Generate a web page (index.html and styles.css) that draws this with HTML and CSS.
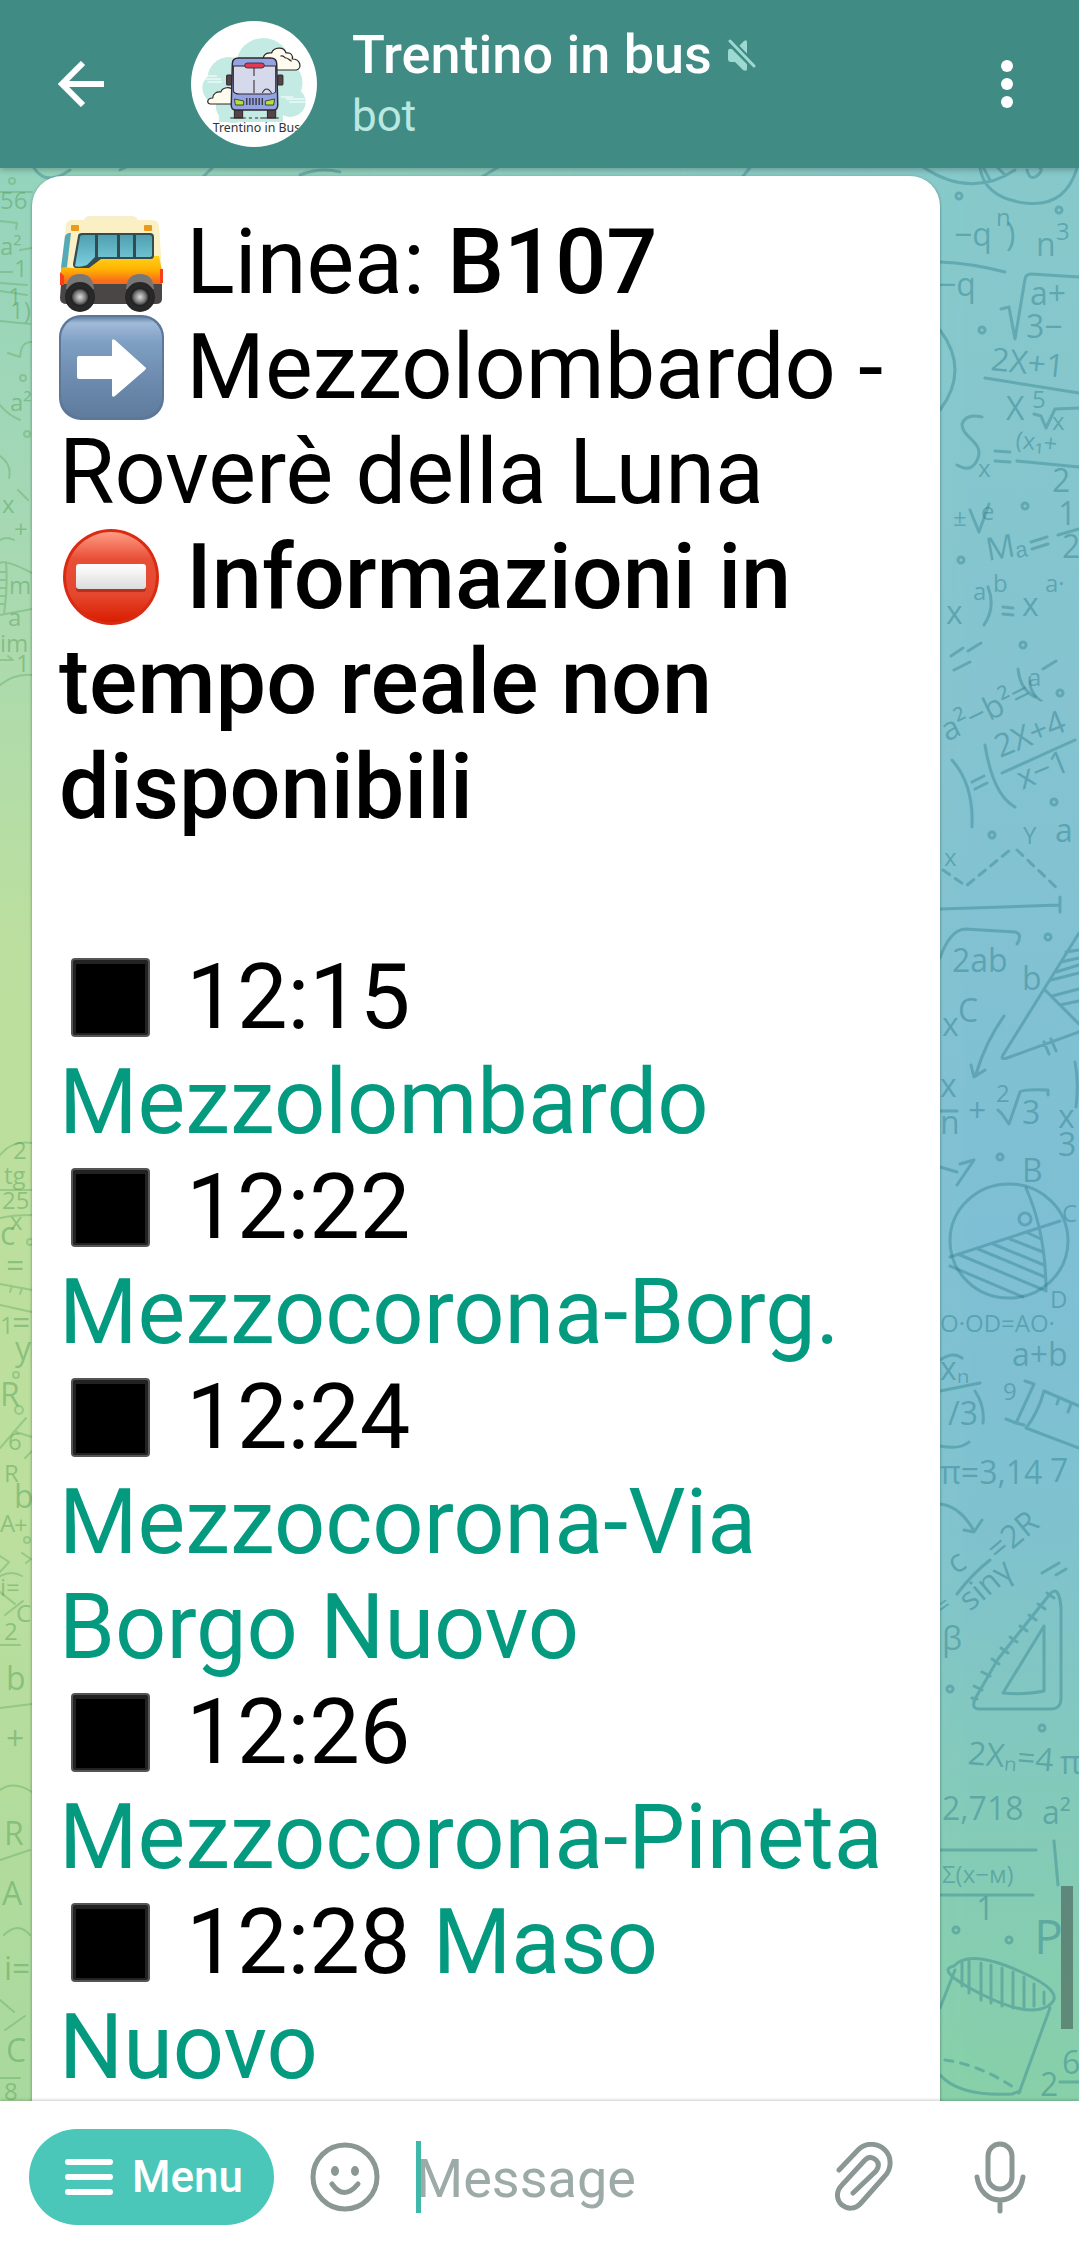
FILE: index.html
```html
<!DOCTYPE html>
<html lang="it">
<head>
<meta charset="utf-8">
<meta name="viewport" content="width=device-width, initial-scale=1">
<title>Trentino in bus</title>
<link rel="stylesheet" href="styles.css">
</head>
<body>
<svg class="defs" width="0" height="0" aria-hidden="true">
  <defs>
    <symbol id="stop" viewBox="0 0 105 105">
      <rect x="12" y="13" width="79" height="79" rx="4" fill="#555"/>
      <rect x="14" y="15" width="75" height="75" rx="2" fill="#222"/>
      <rect x="17" y="19" width="69" height="69" fill="#000"/>
    </symbol>
  </defs>
</svg>

<header class="topbar">
  <button class="icon-button back" aria-label="Indietro">
    <svg width="46" height="46" viewBox="0 0 46 46" fill="none" stroke="#fff" stroke-width="6"><path d="M25 2 4 23l21 21M4 23h42"/></svg>
  </button>
  <svg class="avatar" viewBox="185 21 122 126" preserveAspectRatio="none" role="img" aria-label="Trentino in Bus">
    <rect x="185" y="21" width="122" height="126" fill="#fff"/>
    <g fill="#c3ebe4"><circle cx="255" cy="64" r="26"/><circle cx="222" cy="78" r="21"/><circle cx="268" cy="83" r="25"/><circle cx="212" cy="88" r="16"/><circle cx="226" cy="106" r="17"/><circle cx="281" cy="102" r="15"/><rect x="212" y="60" width="62" height="62"/></g>
    <g stroke="#fff" stroke-width="1"><path d="M193 79h21M198 76h12M201 82h14M277 99h18M272 97h12M280 102h16"/></g>
    <g fill="#fffbee" stroke="#30272b" stroke-width="1.2" stroke-linejoin="round" stroke-linecap="round">
      <path d="M255 62c-1-6 2-10 8-9 2-6 12-7 14 0 5-1 7 3 6 6 8 0 10 9 4 11h-19"/>
      <path d="M272 56c3-1 3 2 5 2s3 2 5 3" fill="none"/>
      <path d="M226 91c-2-5-11-4-12 1-4-1-8 2-8 6-6 0-6 6-2 6h22"/>
    </g>
    <rect x="227" y="109" width="8" height="9" fill="#544349" stroke="#30272b"/><rect x="259" y="109" width="8" height="9" fill="#544349" stroke="#30272b"/>
    <rect x="219.500" y="75" width="5" height="10" rx="1" fill="#544349" stroke="#30272b"/><rect x="269" y="75" width="5" height="10" rx="1" fill="#544349" stroke="#30272b"/>
    <path d="M225 64q0-6 6-6h31q6 0 6 6l1 41q0 5-4 5h-37q-4 0-4-5z" fill="#93a3e3" stroke="#30272b" stroke-width="1.400"/>
    <path d="M226 66h41v26q-2 2-6 2h-29q-5 0-6-3z" fill="#d6d9eb" stroke="#30272b" stroke-width="1"/>
    <path d="M246 67v9m0 4v13M254 93q4-8 9 0" fill="none" stroke="#30272b"/>
    <rect x="237" y="63" width="19" height="5" rx="2.500" fill="#e23a55" stroke="#30272b" stroke-width=".8"/>
    <path d="M239 98v7m3-7v7m3-7v7m3-7v7m3-7v7m3-7v7" stroke="#30272b" stroke-width="1.200"/>
    <path d="M227 99l9 2v4h-8zM266 99l-9 2v4h8z" fill="#b4e332" stroke="#30272b" stroke-width=".8"/>
    <path d="M223 118h15m3 0h3m3 0h3m2 0h18" stroke="#30272b" stroke-width="1.200"/>
    <text x="206" y="132" font-size="12" fill="#333" class="avatar-text">Trentino in Bus</text>
  </svg>
  <div class="who">
    <h1 class="title">Trentino in bus
      <svg class="mute" width="28" height="32" viewBox="0 0 28 32"><path d="M0 12q0-3 4-2l15 15v5q0 3-4 1l-8-8H3q-3 0-3-3zM11 7l5-5q3-2 3 1v13z" fill="#9bd9d1"/><path d="M2 2l24 25" stroke="#408b84" stroke-width="7"/><path d="M2 2l24 25" stroke="#9bd9d1" stroke-width="3" stroke-linecap="round"/></svg>
    </h1>
    <p class="subtitle">bot</p>
  </div>
  <button class="icon-button more" aria-label="Altre opzioni">
    <svg width="12" height="48" viewBox="0 0 12 48" fill="#fff"><circle cx="6" cy="6" r="6"/><circle cx="6" cy="24" r="6"/><circle cx="6" cy="42" r="6"/></svg>
  </button>
</header>

<main class="chat">
  <svg class="wallpaper" viewBox="0 168 1079 1933" preserveAspectRatio="none" aria-hidden="true">
    <defs>
      <linearGradient id="left" x1="0" y1="0" x2="0" y2="1"><stop offset="0" stop-color="#94d4bd"/><stop offset=".18" stop-color="#a5d8b4"/><stop offset=".4" stop-color="#bcdf9f"/><stop offset=".7" stop-color="#bcdf9d"/><stop offset="1" stop-color="#a9d99e"/></linearGradient>
      <linearGradient id="right" x1="0" y1="0" x2="0" y2="1"><stop offset="0" stop-color="#87c9ca"/><stop offset=".3" stop-color="#84c3d0"/><stop offset=".55" stop-color="#7ebfd5"/><stop offset=".7" stop-color="#7fc2cf"/><stop offset=".85" stop-color="#84cab9"/><stop offset="1" stop-color="#87d0a8"/></linearGradient>
      <linearGradient id="fade"><stop offset=".2" stop-color="#000"/><stop offset=".9" stop-color="#fff"/></linearGradient>
      <mask id="m"><rect y="168" width="1079" height="1933" fill="url(#fade)"/></mask>
    </defs>
    <rect y="168" width="1079" height="1933" fill="url(#left)"/>
    <rect y="168" width="1079" height="1933" fill="url(#right)" mask="url(#m)"/>
    <g class="doodle-lines">
      <path d="M920 165q50 35 95 5M980 168q5 30 45 35t52-35M990 180l-8-15M1005 175l-10-10M1027 170q3 12 11 5t-4-10M30 160q12 30 40 10M120 170l20-10M200 180l20-20M300 175q20-8 40-3M480 178l20-12M740 180l12-15"/>
      <circle cx="959" cy="196" r="3"/><circle cx="1059" cy="210" r="3"/><circle cx="982" cy="330" r="3"/><circle cx="1025" cy="506" r="3"/><circle cx="961" cy="560" r="3"/><circle cx="1023" cy="645" r="3"/><circle cx="1060" cy="693" r="3"/><circle cx="1054" cy="802" r="3"/><circle cx="992" cy="835" r="3"/><circle cx="1048" cy="937" r="3"/><circle cx="1000" cy="1157" r="3"/><circle cx="950" cy="1689" r="3"/><circle cx="1042" cy="1728" r="3"/><circle cx="956" cy="1930" r="3"/><circle cx="1009" cy="1940" r="3"/>
      <path d="M940 262q30 1 65 10M1001 309l8-2 6 32 10-60q1-5 6-5l48 3M940 330q30 40 0 80M985 378l94 15M1034 414l7 2 5 12 9-19 24-1M982 417q-16-4-20 7c0 14 22 18 16 34q-6 16-21 7M995 451l15 1M995 461l15 1M1017 461l62 6M1058 535l21-6M1031 542l16-5M1032 549l16-5M988 587q8 20-4 38M1003 607l10 1M1003 614l10 1M970 510l9 22 10-28"/>
      <path d="M954 670l16-8M951 656l12-8m5 3l13-8M1018 669q2 20 17 28M1043 669l13-8M952 760q22 25 20 67M972 782l12-6M975 789l12-6M985 745q8 50 30 62M1002 773l73-33"/>
      <path stroke-dasharray="8 7" d="M943 870l23 16 44-36M1017 850l42 40"/>
      <path d="M940 909l120-4m0-8v15M940 958q10-28 25-29l50 3q8 2 2 12M1004 1016q-18 25-28 58m-5-9l3 12 11-7M1079 933l-76 122q-3 5 4 3l72-26M1045 990l34 34M1051 980l28-7M1056 972l23-7M1061 962l18-4M1066 952l13-2M1052 996l27-7M1060 1005l19-4M1044 1042l5 12m2-15l5 12"/>
      <path d="M940 1111h17M998 1110l4 4 7 10 11-32q2-3 28-2v5M940 1167l17 5M960 1164l14-4-17 25M1075 1062q4 20 1 45"/>
      <ellipse cx="1009" cy="1241" rx="59" ry="57"/><circle cx="1025" cy="1219" r="6"/>
      <path d="M950 1257l110-36M1026 1188q20 45 20 103M960 1255l84 35M978 1249l67 28M993 1244l51 21M1010 1239l33 13M1026 1232l15 7M950 1266l73 31M940 1360q13-9 22-2M940 1391l40-8M1025 1381l9 3-18 39-10-4m10 4l8 2M1079 1406l-35-15q-6 22-18 37l53 20M1059 1398l-2 6M1071 1404l-3 8M975 1391q10 15 8 32M940 1446q20 4 29-4"/>
      <path d="M940 1504q20 2 34 27m-10-1l10 2 8-12M957 1594q15-20 33-34M1042 1573l17-10m-3 12l10-6M998 1659l52-65q9-10 11 14v90q0 12-12 11h-70q-8 0-4-10zM1044 1626v65q-18 4-41 2zM1054 1598l-7-5M1045 1609l-7-5M1036 1620l-7-5M1027 1631l-7-5M1017 1642l-7-5M1008 1653l-7-5M999 1664l-7-5M990 1676l-8-4M982 1690l-8-4M977 1699l-5-1"/>
      <path d="M940 1850h96M940 1895h93M1054 1841l4 44M954 1966q15-17 65 5t29 35q-20 12-67-12t-27-28M955 1970l-15 38M1050 2008l-31 85M940 2075q20 22 72 19l8-3M962 1961v25M969 1961v32M981 1963v37M991 1965v38M1002 1968v38M1013 1972v36M1024 1977v30M1034 1984v22M1044 1992v12M1060 2082h19"/>
      <path stroke-dasharray="8 8" d="M945 2060q35 5 68 27"/>
    </g>
    <g class="doodle-text">
      <text x="954" y="246">−q</text><text x="996" y="226" class="small">n</text><text x="1006" y="246">)</text><text x="1036" y="256">n</text><text x="1056" y="240" class="small">3</text><text x="938" y="296">−q</text><text x="1030" y="305">a+</text><text x="1026" y="338">3−</text><text x="990" y="370" transform="rotate(6 990 370)">2X+1</text><text x="1006" y="420">X</text><text x="1032" y="408" class="small">5</text><text x="1052" y="430" class="small">x</text><text x="978" y="477" class="small">x</text><text x="1015" y="448" class="small" transform="rotate(6 1015 448)">(x₁+</text><text x="1052" y="492">2</text><text x="953" y="526" class="small">±</text><text x="981" y="520" class="small">e</text><text x="988" y="561" transform="rotate(-10 988 561)">Mₐ</text><text x="1058" y="525">1</text><text x="1062" y="558">2</text><text x="946" y="624">x</text><text x="973" y="600" class="small">a</text><text x="993" y="592" class="small">b</text><text x="1022" y="616">x</text><text x="1045" y="592" class="small">a·</text>
      <text x="947" y="742" transform="rotate(-26 947 742)">a²−b²=(</text><text x="1028" y="686" class="small">a</text><text x="1000" y="758" transform="rotate(-22 1000 758)">2X+4</text><text x="1022" y="790" transform="rotate(-22 1022 790)">x−1</text><text x="1023" y="844" class="small">Y</text><text x="944" y="866" class="small">x</text><text x="1055" y="842">a</text>
      <text x="952" y="972">2ab</text><text x="1022" y="990">b</text><text x="958" y="1022">C</text><text x="942" y="1036">x</text><text x="940" y="1097">x</text><text x="940" y="1134">n</text><text x="968" y="1122">+</text><text x="996" y="1102" class="small">2</text><text x="1022" y="1124">3</text><text x="1058" y="1128">x</text><text x="1058" y="1156">3</text>
      <text x="1022" y="1182">B</text><text x="1062" y="1222" class="small">C</text><text x="1050" y="1308" class="small">D</text><text x="940" y="1332" class="small">O·OD=AO·</text><text x="1012" y="1366">a+b</text><text x="940" y="1380">xₙ</text><text x="948" y="1425">/3</text><text x="1003" y="1400" class="small">9</text><text x="940" y="1484">π=3,14</text><text x="1050" y="1482">7</text><text x="998" y="1562" transform="rotate(-40 998 1562)">=2R</text><text x="955" y="1575" transform="rotate(-30 955 1575)">c</text><text x="970" y="1612" transform="rotate(-40 970 1612)">sinγ</text><text x="942" y="1616" class="small" transform="rotate(-35 942 1616)">=</text><text x="942" y="1650">β</text>
      <text x="967" y="1764" transform="rotate(5 967 1764)">2Xₙ=4</text><text x="1060" y="1774">π</text><text x="942" y="1820">2,718</text><text x="1042" y="1824">a²</text><text x="942" y="1883" class="small">Σ(x−м)</text><text x="976" y="1920">1</text><text x="1034" y="1954" class="big">P</text><text x="1040" y="2096">2</text><text x="1062" y="2074">6</text>
    </g>
    <g class="doodle-lines green"><path d="M0 192h32M0 221l17 2-1 6M20 250l12-2M0 272h12M0 283l27 2M0 291l27 4M0 321l30 3M8 353l12 4q1-16 12-15M0 405q8 10 20 15M0 456q12 8 9 22M18 490l10 10M0 540q7-4 14 0M0 563q5-4 32 10M0 615l32-6M6 562q2 25-2 52M0 572h5M0 580h5M0 588h5M0 596h5M0 604h5M0 660h13l-5-4M0 685q15-12 32-10M0 1155q12-15 32-12M0 1190h32M0 1218q12-3 32-3M0 1284l32 6M12 1286l-2 6M22 1288l-2 6M0 1305l32 7M0 1448l26-30M16 1432l16 5M25 1458l7-7M22 1553l9 6-5 4M0 1556l9 6-9 10M0 1576q12-6 22 0M0 1592l15 12M5 1615l18-14M0 1645h20M0 1708l32-4M0 1790q14-10 32 2M0 1860l30-10M4 1935q14-14 26 0M0 2000l14 12M5 2030l20-14M0 2078h20"/><circle cx="12" cy="181" r="3"/><circle cx="23" cy="378" r="3"/><circle cx="27" cy="434" r="3"/><circle cx="16" cy="1375" r="3"/><circle cx="19" cy="1410" r="4"/><circle cx="30" cy="1242" r="3"/><circle cx="27" cy="1540" r="3"/></g>
    <g class="doodle-text green"><text x="0" y="209" class="small">56</text><text x="0" y="255" class="small">a²</text><text x="14" y="277" class="small">1</text><text x="8" y="305" class="small">1</text><text x="10" y="319" class="small">1)</text><text x="10" y="411" class="small">a²</text><text x="2" y="513" class="small">x</text><text x="14" y="538" class="small">+</text><text x="9" y="594" class="small">m</text><text x="8" y="626" class="small">a</text><text x="0" y="652" class="small">im</text><text x="16" y="672" class="small">1</text><text x="13" y="1159" class="small">2</text><text x="4" y="1184" class="small">tg</text><text x="2" y="1209" class="small">25</text><text x="10" y="1230" class="small">x</text><text x="0" y="1245">c</text><text x="6" y="1277">=</text><text x="0" y="1334" class="small">1</text><text x="12" y="1334">=</text><text x="15" y="1360">y</text><text x="0" y="1406">R</text><text x="8" y="1450" class="small">6</text><text x="4" y="1482" class="small">R</text><text x="14" y="1508">b</text><text x="0" y="1532" class="small">A</text><text x="14" y="1534" class="small">+</text><text x="0" y="1596" class="small">i=</text><text x="16" y="1622" class="small">C</text><text x="4" y="1640" class="small">2</text><text x="6" y="1690">b</text><text x="6" y="1750">+</text><text x="4" y="1845">R</text><text x="2" y="1905">A</text><text x="4" y="1980">i=</text><text x="6" y="2062">C</text><text x="4" y="2100" class="small">8</text></g>
  </svg>

  <article class="bubble">
    <p class="message">
      <svg class="emoji" viewBox="0 0 105 105" role="img" aria-label="autobus">
        <defs><linearGradient id="by" x1="0" y1="0" x2="0" y2="1"><stop offset="0" stop-color="#ffd21c"/><stop offset=".4" stop-color="#ffb000"/><stop offset=".7" stop-color="#f8701c"/><stop offset="1" stop-color="#ee5a24"/></linearGradient><linearGradient id="bw" x1="0" y1="0" x2="0" y2="1"><stop offset="0" stop-color="#50a0b0"/><stop offset="1" stop-color="#7bd0de"/></linearGradient><radialGradient id="wh"><stop offset="0" stop-color="#ddd"/><stop offset=".4" stop-color="#8a8a8a"/><stop offset=".6" stop-color="#555"/><stop offset=".7" stop-color="#222"/><stop offset="1" stop-color="#2b2b2b"/></radialGradient></defs>
        <path d="M25 12q0-6 5-6h43q6 0 6 6z" fill="#f7efcb"/>
        <path d="M7 15q1-5 6-5h80q7 0 7 7l3 42v20H2V57z" fill="#fbf0c4"/>
        <path d="M6 57q14 3 24-2 9-8 14-9h56l3 15v20H2V58z" fill="url(#by)"/>
        <path d="M2 74h101v15q0 5-6 5H8q-7 0-7-6z" fill="#4a4646"/>
        <path d="M19 26q0-3 4-3h68q4 0 4 4v18q0 4-3 4H42q-8 6-12 9H17q-3 0-3-4z" fill="#354b50"/>
        <path d="M21 27q0-2 3-2h12v22l-8 8q-8 3-12 1zM39 25h19v22H39zM61 25h13v22H61zM77 25h14q2 0 2 3v17q0 2-3 2H77z" fill="url(#bw)"/>
        <path d="M6 26q2-3 4-3h2L8 57l-6 1z" fill="#55aab8"/>
        <rect x="12" y="15" width="8" height="6" rx="1" fill="#eb9a19"/><rect x="85" y="15" width="8" height="6" rx="1" fill="#eb9a19"/>
        <path d="M1 62l4 4v9H1zM101 59h3v14h-3z" fill="#f6401c"/>
        <path d="M7 79q1-15 14-15t14 15zM67 79q1-15 14-15t14 15z" fill="#777"/>
        <circle cx="21" cy="87" r="15" fill="#272727"/><circle cx="21" cy="87" r="12" fill="url(#wh)"/><circle cx="81" cy="87" r="15" fill="#272727"/><circle cx="81" cy="87" r="12" fill="url(#wh)"/>
      </svg> Linea: <strong>B107</strong><br>
      <svg class="emoji" viewBox="0 0 105 105" role="img" aria-label="freccia destra">
        <defs><linearGradient id="ab" x1="0" y1="0" x2="0" y2="1"><stop offset="0" stop-color="#6484a8"/><stop offset=".06" stop-color="#a0bad9"/><stop offset=".25" stop-color="#7f9fc4"/><stop offset=".6" stop-color="#6d8caf"/><stop offset="1" stop-color="#5f7c9d"/></linearGradient></defs>
        <rect width="105" height="105" rx="22" fill="#5c7797"/><rect x="2" y="2" width="101" height="100" rx="21" fill="url(#ab)"/>
        <path d="M20 41h33V26q0-3 3-1l30 27q2 1 0 3L56 81q-3 2-3-1V64H20q-2 0-2-2V43q0-2 2-2z" fill="#fff"/>
      </svg> Mezzolombardo - Roverè della Luna<br>
      <svg class="emoji" viewBox="0 0 105 105" role="img" aria-label="divieto">
        <defs><linearGradient id="rn" x1="0" y1="0" x2="0" y2="1"><stop offset="0" stop-color="#ff9b83"/><stop offset=".3" stop-color="#e84f37"/><stop offset=".7" stop-color="#e5472e"/><stop offset="1" stop-color="#d91d00"/></linearGradient><linearGradient id="wb" x1="0" y1="0" x2="0" y2="1"><stop offset="0" stop-color="#fff"/><stop offset="1" stop-color="#dcdcdc"/></linearGradient></defs>
        <circle cx="52" cy="52" r="48" fill="#d92a12"/><circle cx="52" cy="52" r="45" fill="url(#rn)"/>
        <rect x="17" y="40" width="70" height="27" rx="3" fill="#b3331f"/><rect x="17" y="39" width="70" height="25" rx="3" fill="url(#wb)"/>
      </svg> <strong>Informazioni in tempo reale non disponibili</strong><br>
      <br>
      <svg class="emoji"><use href="#stop"/></svg> 12:15 <a href="#mezzolombardo">Mezzolombardo</a><br>
      <svg class="emoji"><use href="#stop"/></svg> 12:22 <a href="#borg">Mezzocorona-Borg.</a><br>
      <svg class="emoji"><use href="#stop"/></svg> 12:24 <a href="#borgo-nuovo">Mezzocorona-Via Borgo Nuovo</a><br>
      <svg class="emoji"><use href="#stop"/></svg> 12:26 <a href="#pineta">Mezzocorona-Pineta</a><br>
      <svg class="emoji"><use href="#stop"/></svg> 12:28 <a href="#maso-nuovo">Maso Nuovo</a>
    </p>
  </article>
  <div class="scrollbar"></div>
</main>

<footer class="composer">
  <button class="menu-button">
    <svg width="48" height="36" viewBox="0 0 48 36" stroke="#fff" stroke-width="6" stroke-linecap="round"><path d="M3 3h42M3 18h42M3 33h42"/></svg>
    Menu
  </button>
  <button class="icon-button smile" aria-label="Emoji">
    <svg width="70" height="70" viewBox="0 0 70 70" fill="none" stroke="#8b9794" stroke-width="5"><ellipse cx="35" cy="35" rx="32" ry="32"/><path d="M22 42q12 17 26 0" stroke-linecap="round"/><g fill="#8b9794" stroke="none"><ellipse cx="25" cy="29" rx="4" ry="5"/><ellipse cx="45" cy="29" rx="4" ry="5"/></g></svg>
  </button>
  <label class="field"><span class="caret"></span><input class="input" type="text" placeholder="Message" aria-label="Message"></label>
  <button class="icon-button clip" aria-label="Allega">
    <svg width="60" height="70" viewBox="0 0 60 70" fill="none" stroke="#8b9794" stroke-width="5" stroke-linecap="round"><path d="M5 28 24 8c9-9 21-6 27 0s8 18-1 27L27 61c-6 7-14 6-19 2s-7-13 0-20L31 18c4-4 8-3 11 0s3 7 0 11L19 51"/></svg>
  </button>
  <button class="icon-button mic" aria-label="Messaggio vocale">
    <svg width="52" height="74" viewBox="0 0 52 74" fill="none" stroke="#8b9794" stroke-width="5" stroke-linecap="round"><rect x="14" y="4" width="24" height="45" rx="12"/><path d="M3 37c2 15 12 23 23 23s21-8 23-23M26 61v10"/></svg>
  </button>
</footer>
</body>
</html>
```
FILE: styles.css
```css
* { box-sizing: border-box; }
body {
  margin: 0;
  height: 100vh;
  display: flex;
  flex-direction: column;
  overflow: hidden;
  background: #fff;
  font-family: Roboto, "Liberation Sans", sans-serif;
}
.defs { position: absolute; }
button { border: 0; padding: 0; background: none; font: inherit; color: inherit; }
svg { display: block; flex: none; }
.icon-button { display: flex; flex: none; }

.topbar {
  flex: none;
  height: 168px;
  display: flex;
  align-items: center;
  padding: 0 66px 0 58px;
  background: #408b84;
  color: #fff;
  position: relative;
  z-index: 1;
  box-shadow: 0 2px 6px rgba(0, 0, 0, .25);
}
.avatar { width: 126px; height: 126px; border-radius: 50%; margin: 0 35px 0 87px; }
.avatar-text { font-family: "Noto Sans", sans-serif; }
.who { flex: 1; min-width: 0; }
.title { margin: 0; display: flex; align-items: center; gap: 16px; font-size: 54px; line-height: 64px; font-weight: 500; }
.subtitle { margin: 0; font-size: 44px; line-height: 58px; color: #b9e8e2; }

.chat {
  flex: 1;
  min-height: 0;
  position: relative;
  overflow: hidden;
  padding: 8px 139px 0 32px;
}
.wallpaper { position: absolute; inset: 0; width: 100%; height: 100%; }
.doodle-lines { fill: none; stroke: #2c7d8a; stroke-opacity: .4; stroke-width: 3; stroke-linecap: round; stroke-linejoin: round; }
.doodle-text { fill: #2c7d8a; fill-opacity: .45; font-family: "Open Sans", sans-serif; font-weight: 400; font-size: 32px; }
.doodle-text .small { font-size: 24px; }
.doodle-text .big { font-size: 48px; }
.doodle-lines.green { stroke: #5da860; stroke-width: 2; }
.doodle-text.green { fill: #4e9c52; }

.bubble {
  position: relative;
  min-height: 100%;
  padding: 34px 24px 34px 27px;
  border-radius: 30px 30px 0 0;
  background: #fff;
  box-shadow: 0 1px 3px rgba(0, 50, 40, .5);
}
.message { margin: 0; font-size: 90px; line-height: 105px; color: #000; }
.message strong { font-weight: 500; }
.message a { color: #049a80; text-decoration: none; }
.emoji { display: inline-block; width: 105px; height: 105px; vertical-align: top; }
.scrollbar { position: absolute; right: 6px; bottom: 72px; width: 12px; height: 143px; background: rgba(64, 80, 76, .55); }

.composer {
  flex: none;
  position: relative;
  height: 148px;
  display: flex;
  align-items: center;
  padding: 4px 53px 0 29px;
  background: #fff;
  box-shadow: 0 -1px 3px rgba(0, 0, 0, .2);
}
.menu-button {
  flex: none;
  display: flex;
  align-items: center;
  gap: 19px;
  height: 96px;
  padding: 0 31px 0 36px;
  border-radius: 48px;
  background: #4ac7b8;
  color: #fff;
  font-size: 44px;
  font-weight: 500;
}
.smile { margin: 0 36px 0 36px; }
.field { flex: 1; min-width: 0; position: relative; display: flex; align-items: center; height: 72px; }
.caret { position: absolute; left: 0; top: 0; width: 5px; height: 72px; background: #3fb8aa; }
.input { width: 100%; height: 72px; border: 0; outline: 0; padding: 4px 0 0; background: none; font: 54px/72px Roboto, "Liberation Sans", sans-serif; color: #222; }
.input::placeholder { color: #9caba7; opacity: 1; }
.clip { margin-right: 80px; }
```
